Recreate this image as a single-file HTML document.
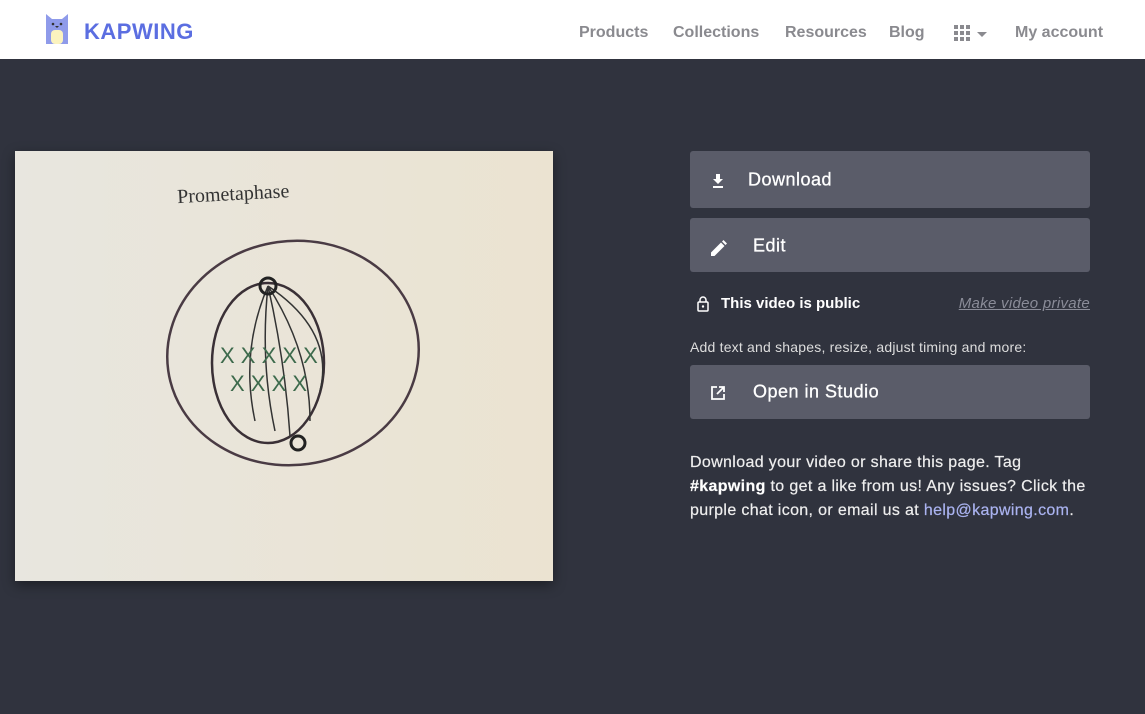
<!DOCTYPE html>
<html><head><style>
body{margin:0;width:1145px;height:714px;background:#30333e;font-family:"Liberation Sans",sans-serif;overflow:hidden;position:relative}
.nav{position:absolute;top:0;left:0;width:1145px;height:59px;background:#fff}
.logo{position:absolute;left:84px;top:19px;font-weight:bold;font-size:22px;color:#5b6ee1;letter-spacing:0.5px}
.links{position:absolute;top:24px;font-size:16px;font-weight:bold;color:#8a8a8f}
.btn{position:absolute;left:690px;width:400px;background:#5a5c69;border-radius:3px;color:#fff;font-size:18px;letter-spacing:0.5px;-webkit-text-stroke:0.3px #fff}
.btn span{position:absolute;top:50%;transform:translateY(-50%)}
.txt{position:absolute;color:#fff}
</style></head><body>
<div class="nav">
<svg style="position:absolute;left:46px;top:14px" width="22" height="30" viewBox="0 0 22 30"><path d="M0 0L6 5H16L22 0V30H0Z" fill="#8f9bea"/><rect x="5" y="16" width="12" height="14" rx="4" fill="#fbf3bf"/><circle cx="7" cy="10" r="1.3" fill="#333"/><circle cx="15" cy="10" r="1.3" fill="#333"/><path d="M9 12h4l-2 2z" fill="#333"/></svg>
<div class="logo">KAPWING</div>
<div class="links" style="left:579px">Products</div>
<div class="links" style="left:673px">Collections</div>
<div class="links" style="left:785px">Resources</div>
<div class="links" style="left:889px">Blog</div>
<svg style="position:absolute;left:954px;top:25px" width="36" height="16"><g fill="#8a8a8f"><rect x="0" y="0" width="4" height="4"/><rect x="6" y="0" width="4" height="4"/><rect x="12" y="0" width="4" height="4"/><rect x="0" y="6" width="4" height="4"/><rect x="6" y="6" width="4" height="4"/><rect x="12" y="6" width="4" height="4"/><rect x="0" y="12" width="4" height="4"/><rect x="6" y="12" width="4" height="4"/><rect x="12" y="12" width="4" height="4"/><path d="M23 7h10l-5 5z"/></g></svg>
<div class="links" style="left:1015px">My account</div>
</div>
<svg style="position:absolute;left:15px;top:151px;box-shadow:0 4px 12px rgba(0,0,0,.4)" width="538" height="430" viewBox="0 0 538 430">
<defs><linearGradient id="g" x1="0" y1="0" x2="1" y2="0"><stop offset="0" stop-color="#e8e6df"/><stop offset="1" stop-color="#ebe3d1"/></linearGradient></defs>
<rect width="538" height="430" fill="url(#g)"/>
<text x="162" y="48" font-family="Liberation Serif" font-size="20" fill="#333" transform="rotate(-3 240 40)">Prometaphase</text>
<ellipse cx="278" cy="202" rx="126" ry="112" fill="none" stroke="#4a3b44" stroke-width="2.5" transform="rotate(-8 278 202)"/>
<ellipse cx="253" cy="212" rx="56" ry="80" fill="none" stroke="#3a3036" stroke-width="2.5"/>
<g stroke="#333" stroke-width="1.5" fill="none"><path d="M253 135Q225 200 240 270M253 135Q245 210 260 280M253 135Q270 210 275 285M253 135Q295 200 295 270M253 135Q320 180 305 240"/></g>
<circle cx="253" cy="135" r="8" fill="none" stroke="#222" stroke-width="3"/><circle cx="283" cy="292" r="7" fill="none" stroke="#222" stroke-width="3"/>
<g font-size="22" fill="#3d6a4c"><text x="205" y="212">X X X X X</text><text x="215" y="240">X X X X</text></g>
</svg>
<div class="btn" style="top:151px;height:57px"><svg style="position:absolute;left:22px;top:23px" width="12" height="14"><path d="M4 0h4v5h3L6 10 1 5h3z M1 12h10v2H1z" fill="#fff"/></svg><span style="left:58px">Download</span></div>
<div class="btn" style="top:218px;height:54px"><svg style="position:absolute;left:21px;top:22px" width="16" height="16"><path d="M0 16v-3.5L10 2.5 13.5 6 3.5 16z M11 1.5 12.5 0 16 3.5 14.5 5z" fill="#fff"/></svg><span style="left:63px;top:52%">Edit</span></div>
<svg style="position:absolute;left:697px;top:296px" width="12" height="16"><rect x="1" y="6" width="10" height="9" rx="1" fill="none" stroke="#fff" stroke-width="1.5"/><path d="M3 6V4a3 3 0 0 1 6 0v2" fill="none" stroke="#fff" stroke-width="1.5"/><circle cx="6" cy="10.5" r="1.2" fill="#fff"/></svg>
<div class="txt" style="left:721px;top:295px;font-size:15px;font-weight:bold">This video is public</div>
<div class="txt" style="right:55px;top:295px;font-size:15px;font-style:italic;color:#8a8c98;text-decoration:underline;letter-spacing:0.3px">Make video private</div>
<div class="txt" style="left:690px;top:339px;font-size:14px;color:#ddd;letter-spacing:0.2px">Add text and shapes, resize, adjust timing and more:</div>
<div class="btn" style="top:365px;height:54px"><svg style="position:absolute;left:21px;top:21px" width="14" height="14"><path d="M6 1H1v12h12V8" fill="none" stroke="#fff" stroke-width="1.8"/><path d="M8 1h5v5M13 1L6 8" fill="none" stroke="#fff" stroke-width="1.8"/></svg><span style="left:63px">Open in Studio</span></div>
<div class="txt" style="left:690px;top:451px;width:400px;font-size:16px;line-height:24px;color:#eee;letter-spacing:0.35px;-webkit-text-stroke:0.2px #eee">Download your video or share this page. Tag <b style="color:#fff">#kapwing</b> to get a like from us! Any issues? Click the purple chat icon, or email us at <span style="color:#aab3f0;-webkit-text-stroke:0.2px #aab3f0">help@kapwing.com</span>.</div>
</body></html>
